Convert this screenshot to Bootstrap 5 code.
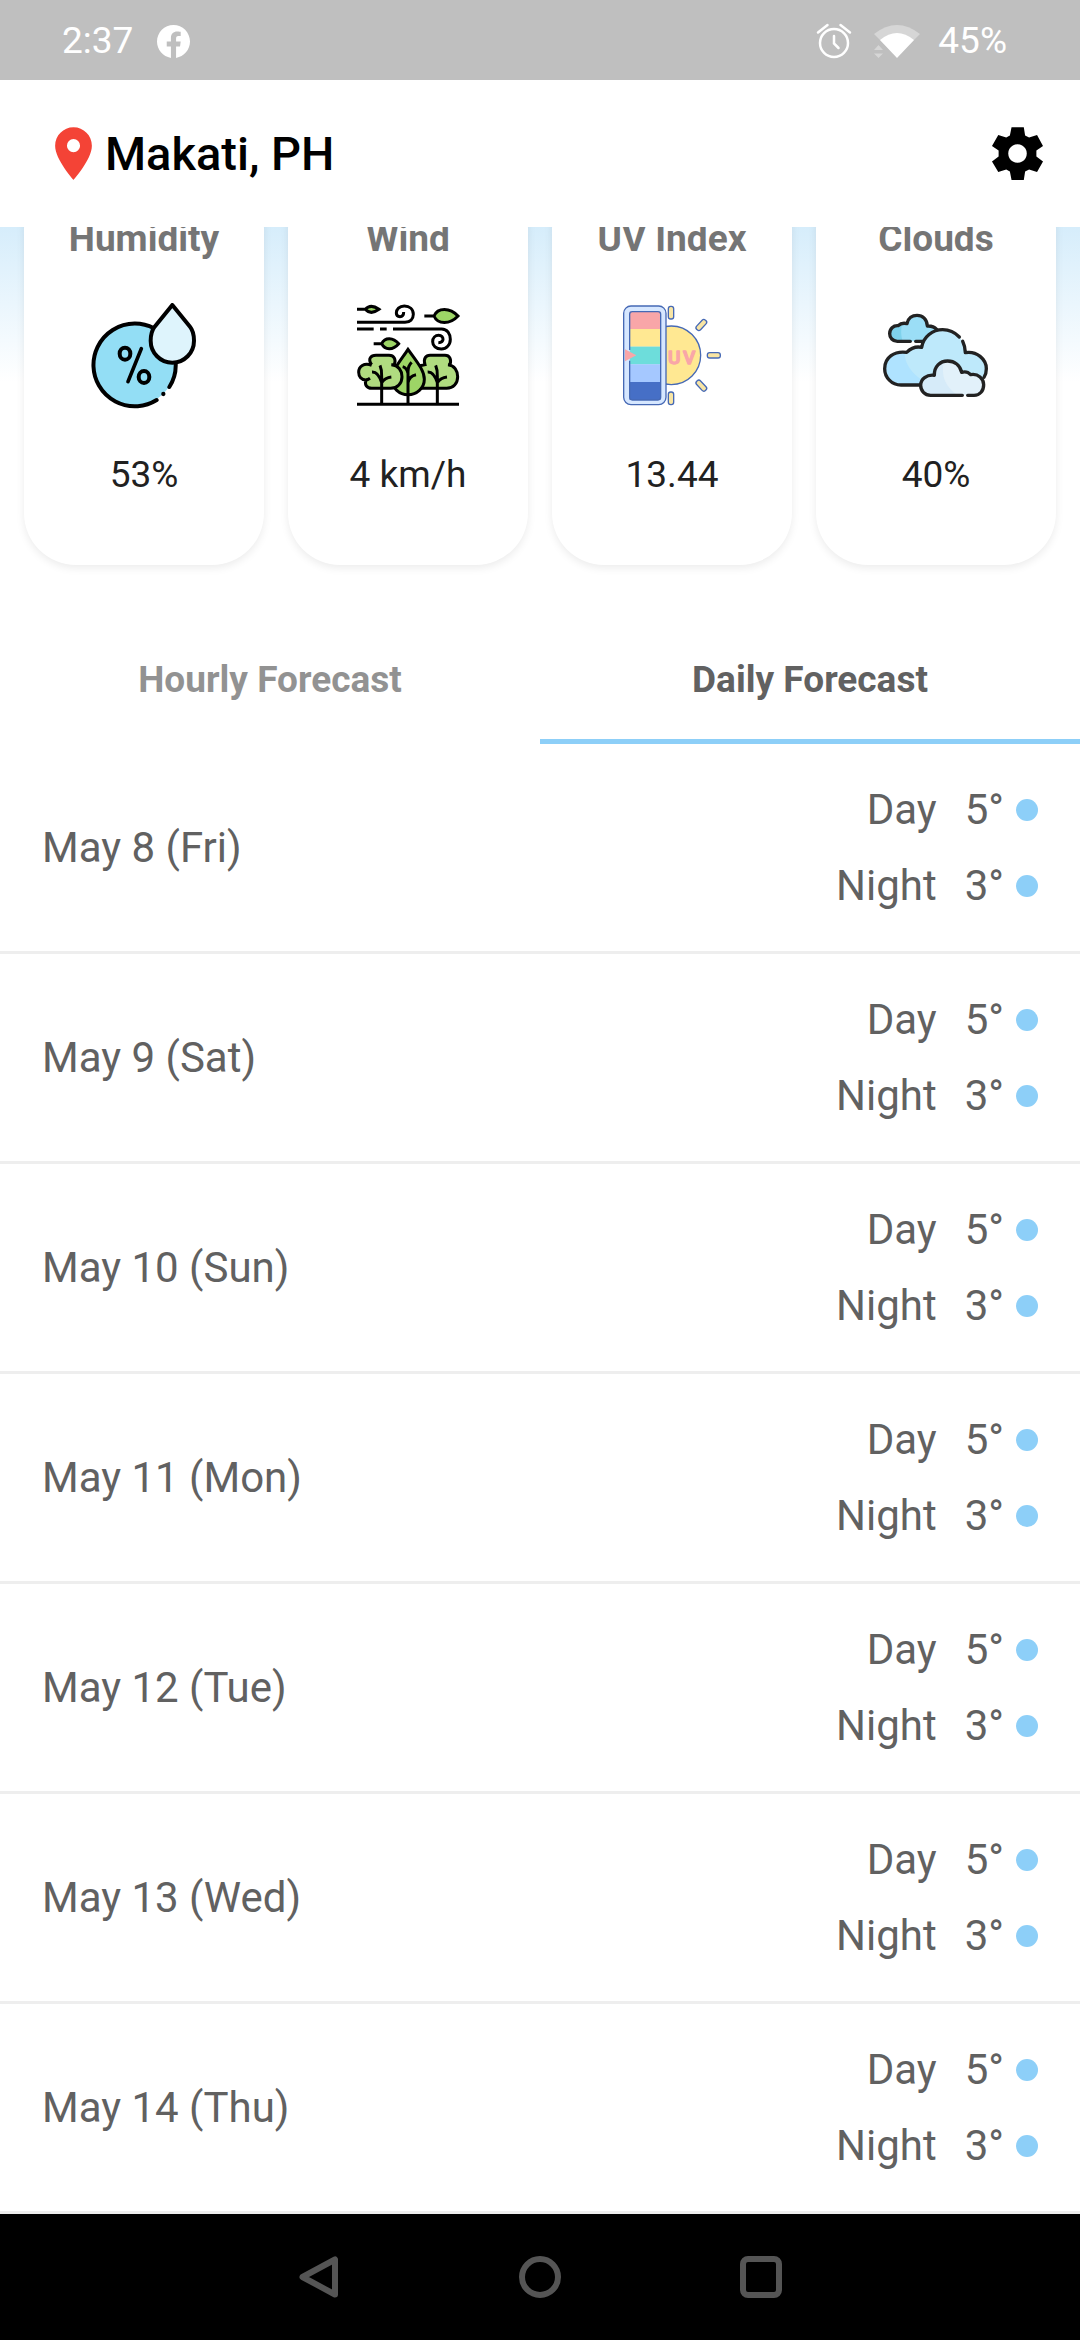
<!DOCTYPE html>
<html lang="en">
<head>
<meta charset="utf-8">
<meta name="viewport" content="width=device-width, initial-scale=1">
<title>Weather – Makati, PH</title>
<link rel="stylesheet" href="https://cdn.jsdelivr.net/npm/bootstrap@5.3.0/dist/css/bootstrap.min.css">
<style>
  body { font-family: Roboto, "Noto Sans", sans-serif; color: #616161; background: #fff; }
  svg { display: block; flex: none; }
  .status-strip { height: 80px; padding: 2px 73px 0 62px; background: #bfbfbf; color: #fff; font-size: 37px; line-height: 44px; }
  .app-bar { height: 147px; padding: 0 36px 0 42px; }
  .app-title { font-size: 47px; line-height: 56px; font-weight: 500; color: #000; }
  .conditions { overflow: hidden; padding: 0 24px 56px; background: linear-gradient(#d6edfb, #fff 155px); }
  .tile-row { display: grid; grid-template-columns: repeat(4, 1fr); gap: 24px; margin-top: -49px; }
  .tile { padding: 40px 8px 69px; border: 0; border-radius: 52px; background: #fff; box-shadow: 0 3px 9px rgba(0,0,0,.08); }
  .tile-label { margin: 0; font-size: 37px; line-height: 42px; font-weight: 700; color: #757575; }
  .tile-icon { width: 106px; height: 106px; margin: 43px 0 45px; }
  .tile-value { margin: 0; font-size: 37px; line-height: 42px; color: #212121; }
  .forecast-tabs .nav-link { padding: 38px 0; border: 0; border-bottom: 5px solid transparent; border-radius: 0; background: none; font-size: 37px; line-height: 42px; font-weight: 700; color: #929292; }
  .forecast-tabs .nav-link.active { color: #616161; border-bottom-color: #8dcff8; background: none; }
  .day-row { height: 210px; padding: 0 42px; border: 0; border-bottom: 3px solid #eee !important; font-size: 42px; line-height: 76px; color: #616161; }
  .reading { gap: 28px; }
  .temp { gap: 12px; }
  .dot { width: 22px; height: 22px; background: #8dcff8; }
  .system-nav { height: 126px; gap: 179px; background: #000; }
  .bare { padding: 0; border: 0; background: none; }
</style>
</head>
<body class="d-flex flex-column min-vh-100">

<div class="status-strip d-flex align-items-center justify-content-between">
  <div class="d-flex align-items-center">
    <span>2:37</span>
    <svg class="ms-4" width="33" height="33" viewBox="0 0 24 24" fill="#fff" aria-label="Facebook"><path d="M24 12.07C24 5.41 18.63 0 12 0S0 5.41 0 12.07c0 5.99 4.35 10.96 10.12 11.87V15.600H7.080v-3.530h3.040V9.410c0-3.020 1.800-4.700 4.550-4.700 1.310 0 2.560.24 2.560.24v2.970h-1.600c-1.490 0-1.760.93-1.760 1.880v2.270h3.370l-.5 3.530h-2.870v8.340C19.650 23.030 24 18.060 24 12.070z"/></svg>
  </div>
  <div class="d-flex align-items-center">
    <svg width="36" height="36" viewBox="0 0 36 36" fill="none" stroke="#fff" stroke-width="2.500" stroke-linecap="round" aria-label="Alarm"><circle cx="18" cy="20" r="14"/><path d="M18 13v7.500l4.500 4.500M2 9.500L11.500 2M34 9.500L24.500 2"/></svg>
    <svg class="mx-3 ps-1" width="54" height="36" viewBox="0 0 50 36" aria-label="Wi-Fi"><path d="M2 11Q25-7 48 11L25 34z" fill="#d6d6d6"/><path d="M8 17Q25 3 42 17L25 35z" fill="#fff"/><path d="M2 27l4.500-5 4.500 5zM2 30.500h9l-4.500 4.500z" fill="#d6d6d6"/></svg>
    <span>45%</span>
  </div>
</div>

<header class="app-bar d-flex align-items-center justify-content-between bg-white">
  <div class="d-flex align-items-center">
    <svg width="63" height="63" viewBox="0 0 24 24" fill="#f44336" aria-hidden="true"><path d="M12 2C8.130 2 5 5.130 5 9c0 5.250 7 13 7 13s7-7.750 7-13c0-3.870-3.130-7-7-7zm0 9.500a2.500 2.500 0 0 1 0-5 2.500 2.500 0 0 1 0 5z"/></svg>
    <h1 class="app-title m-0">Makati, PH</h1>
  </div>
  <button class="bare" type="button" aria-label="Settings">
    <svg width="53" height="53" viewBox="631 380 160 160"><path fill-rule="evenodd" d="M693 381H730L734 406 746 412 770 404 788 437 768 451V469L788 484 770 516 746 508 734 514 730 540H693L688 514 677 508 653 516 634 484 654 469V451L634 437 653 404 677 412 688 406zM711 432a28 28 0 1 0 .1 0z"/></svg>
  </button>
</header>

<section class="conditions">
  <div class="tile-row">
    <article class="card tile align-items-center">
      <h2 class="tile-label">Humidity</h2>
      <svg class="tile-icon" viewBox="273 249 318 318" fill="none" stroke="#000" stroke-width="12" stroke-linecap="round" stroke-linejoin="round" aria-hidden="true">
        <circle cx="404" cy="435" r="122" fill="#93def5" stroke="none"/>
        <path d="M462 325A124 124 0 1 0 470 540M508 501Q529 469 527 430"/>
        <circle cx="490" cy="522" r="6.500" fill="#000" stroke="none"/>
        <path fill="#def4fc" d="M517 255L570 320C580 332 582 345 582 362A65 66 0 0 1 452 362C452 345 455 332 464 320z"/>
        <ellipse cx="375" cy="401" rx="16" ry="18"/><ellipse cx="432" cy="471" rx="16" ry="18"/><path d="M424 386L384 485" stroke-width="11"/>
      </svg>
      <p class="tile-value">53%</p>
    </article>

    <article class="card tile align-items-center">
      <h2 class="tile-label">Wind</h2>
      <svg class="tile-icon" viewBox="255 249 318 318" fill="none" stroke="#000" stroke-width="9" aria-hidden="true">
        <g fill="#9dd566">
          <path d="M261 268H286M286 268Q302 250 327 268Q302 286 286 268z"/>
          <path d="M463 288H492C503 262 540 262 564 288C540 314 503 314 492 288z"/>
          <path d="M311 371H335C345 350 370 352 386 371C370 390 345 392 335 371z"/>
        </g>
        <path d="M261 307H405C420 307 430 297 430 283C430 268 419 258 403 258C388 258 379 268 379 279C379 286 384 290 390 290C397 290 401 285 401 276"/>
        <path d="M261 327H311M330 327H350M369 327H515C532 327 541 342 541 358C541 375 529 387 514 387C498 387 488 377 488 365C488 354 496 346 506 346C515 346 519 352 519 358C519 364 514 368 505 368"/>
        <path fill="#b0dc80" d="M450 437L465 434C459 415 468 406 480 406H525C539 406 545 418 540 434H534C554 436 563 453 563 470C563 490 550 505 530 505H455z"/>
        <path fill="#9dd566" d="M414 388C440 425 463 450 463 478C463 505 440 524 414 524C388 524 366 505 366 478C366 450 390 425 414 388z"/>
        <path fill="#b0dc80" d="M305 434C292 416 303 406 318 406H357C372 406 379 418 373 434H364C386 436 396 453 396 470C396 490 382 505 362 505H305C290 505 283 494 288 480C274 480 266 469 266 457C266 440 282 427 305 436"/>
        <path d="M288 480Q293 480 300 475M330 436Q336 450 335 470V553M306 456Q325 455 335 488Q345 473 364 471M497 436Q503 450 502 470V553M473 456Q492 455 502 488Q512 473 531 471M425 427Q414 437 414 455V553M398 440Q410 443 414 460M438 464Q418 468 414 488"/>
        <path d="M261 553H567"/>
      </svg>
      <p class="tile-value">4 km/h</p>
    </article>

    <article class="card tile align-items-center">
      <h2 class="tile-label">UV Index</h2>
      <svg class="tile-icon" viewBox="237 249 318 318" fill="none" stroke="#4669b5" stroke-width="4" aria-hidden="true">
        <circle cx="394" cy="406" r="88" fill="#ffe892"/>
        <g fill="#f8e5a4">
          <rect x="385" y="259" width="16" height="38" rx="7"/><rect x="385" y="516" width="16" height="38" rx="7"/>
          <rect x="502" y="398" width="39" height="16" rx="7"/>
          <rect x="465" y="307" width="38" height="16" rx="7" transform="rotate(-47 484 315)"/>
          <rect x="465" y="489" width="38" height="16" rx="7" transform="rotate(47 484 497)"/>
        </g>
        <rect x="251" y="258" width="127" height="296" rx="22" fill="#d6e7ff"/>
        <g stroke="none">
          <path fill="#f9a6a8" d="M269 275H361V327H269z"/><path fill="#ffe892" d="M269 327H361V380H269z"/>
          <path fill="#6ddddb" d="M269 380H361V433H269z"/><path fill="#a5c8ff" d="M269 433H361V486H269z"/>
          <path fill="#466fc6" d="M269 486H361V540H269z"/><path fill="#f9a6a8" d="M255 388L289 406 255 424z"/>
        </g>
        <path d="M269 390V283Q269 275 277 275H354Q362 275 362 283V532Q362 540 354 540H277Q269 540 269 532V422"/>
        <text x="384" y="431" font-family="Roboto, sans-serif" font-size="57" font-weight="500" fill="#f9a6a8" stroke="#f9a6a8" stroke-width="4" stroke-linejoin="round">U<tspan x="429">V</tspan></text>
      </svg>
      <p class="tile-value">13.44</p>
    </article>

    <article class="card tile align-items-center">
      <h2 class="tile-label">Clouds</h2>
      <svg class="tile-icon" viewBox="249 249 318 318" fill="none" stroke="#222" stroke-width="10" stroke-linecap="round" stroke-linejoin="round" aria-hidden="true">
        <path stroke="none" fill="#9bdef6" d="M374 364H292C278 364 269 353 269 341C269 326 280 316 294 317Q305 307 321 311C324 294 337 286 351 286C368 286 381 298 382 318Q402 317 410 330z"/>
        <path stroke="none" fill="#7fd2ec" d="M308 364H292C278 364 269 353 269 341C269 326 280 316 294 317L306 314Q300 340 308 364z"/>
        <path d="M374 364H347M331 364H292C278 364 269 353 269 341C269 326 280 316 294 317Q305 307 321 311C324 294 337 286 351 286C368 286 381 298 382 318Q400 317 410 328"/>
        <path stroke="none" fill="#bee9fb" d="M360 495H303C275 495 254 472 254 446C254 412 283 392 320 397Q340 377 365 382C370 350 398 329 428 329C462 329 492 352 496 398C530 392 559 418 559 446Q559 462 551 475L500 500z"/>
        <path stroke="none" fill="#afe3ff" d="M370 495H303C275 495 254 472 254 446C254 418 279 395 313 396Q316 450 370 482z"/>
        <path d="M360 495H303C275 495 254 472 254 446C254 412 283 392 320 397Q340 377 365 382C370 350 398 329 428 329Q457 329 478 351M488 364Q495 378 496 398C530 392 559 418 559 446Q559 462 552 472"/>
        <path stroke="none" fill="#e2f1fa" d="M392 526C374 526 362 512 362 496C362 477 380 463 403 466C402 440 420 423 443 423C464 423 480 436 485 457Q501 452 512 464C535 460 551 476 551 494C551 512 540 526 522 526z"/>
        <path stroke="none" fill="#d6ebf9" d="M392 526C374 526 362 512 362 496C362 477 380 463 403 466C402 446 412 430 431 425Q418 490 474 526z"/>
        <path d="M487 526H392C374 526 362 512 362 496C362 477 380 463 403 466C402 440 420 423 443 423C464 423 480 436 485 457Q501 452 512 464C535 460 551 476 551 494C551 512 540 526 522 526H503"/>
      </svg>
      <p class="tile-value">40%</p>
    </article>
  </div>
</section>

<div class="forecast-tabs nav nav-fill flex-nowrap" role="tablist">
  <button class="nav-link w-50" type="button" role="tab" aria-selected="false">Hourly Forecast</button>
  <button class="nav-link w-50 active" type="button" role="tab" aria-selected="true">Daily Forecast</button>
</div>

<ul class="list-group list-group-flush">
  <li class="list-group-item day-row d-flex align-items-center justify-content-between"><span>May 8 (Fri)</span><div><div class="reading d-flex justify-content-end"><span>Day</span><span class="temp d-flex align-items-center">5°<i class="dot rounded-circle"></i></span></div><div class="reading d-flex justify-content-end"><span>Night</span><span class="temp d-flex align-items-center">3°<i class="dot rounded-circle"></i></span></div></div></li>
  <li class="list-group-item day-row d-flex align-items-center justify-content-between"><span>May 9 (Sat)</span><div><div class="reading d-flex justify-content-end"><span>Day</span><span class="temp d-flex align-items-center">5°<i class="dot rounded-circle"></i></span></div><div class="reading d-flex justify-content-end"><span>Night</span><span class="temp d-flex align-items-center">3°<i class="dot rounded-circle"></i></span></div></div></li>
  <li class="list-group-item day-row d-flex align-items-center justify-content-between"><span>May 10 (Sun)</span><div><div class="reading d-flex justify-content-end"><span>Day</span><span class="temp d-flex align-items-center">5°<i class="dot rounded-circle"></i></span></div><div class="reading d-flex justify-content-end"><span>Night</span><span class="temp d-flex align-items-center">3°<i class="dot rounded-circle"></i></span></div></div></li>
  <li class="list-group-item day-row d-flex align-items-center justify-content-between"><span>May 11 (Mon)</span><div><div class="reading d-flex justify-content-end"><span>Day</span><span class="temp d-flex align-items-center">5°<i class="dot rounded-circle"></i></span></div><div class="reading d-flex justify-content-end"><span>Night</span><span class="temp d-flex align-items-center">3°<i class="dot rounded-circle"></i></span></div></div></li>
  <li class="list-group-item day-row d-flex align-items-center justify-content-between"><span>May 12 (Tue)</span><div><div class="reading d-flex justify-content-end"><span>Day</span><span class="temp d-flex align-items-center">5°<i class="dot rounded-circle"></i></span></div><div class="reading d-flex justify-content-end"><span>Night</span><span class="temp d-flex align-items-center">3°<i class="dot rounded-circle"></i></span></div></div></li>
  <li class="list-group-item day-row d-flex align-items-center justify-content-between"><span>May 13 (Wed)</span><div><div class="reading d-flex justify-content-end"><span>Day</span><span class="temp d-flex align-items-center">5°<i class="dot rounded-circle"></i></span></div><div class="reading d-flex justify-content-end"><span>Night</span><span class="temp d-flex align-items-center">3°<i class="dot rounded-circle"></i></span></div></div></li>
  <li class="list-group-item day-row d-flex align-items-center justify-content-between"><span>May 14 (Thu)</span><div><div class="reading d-flex justify-content-end"><span>Day</span><span class="temp d-flex align-items-center">5°<i class="dot rounded-circle"></i></span></div><div class="reading d-flex justify-content-end"><span>Night</span><span class="temp d-flex align-items-center">3°<i class="dot rounded-circle"></i></span></div></div></li>
</ul>

<nav class="system-nav d-flex align-items-center justify-content-center mt-auto" aria-label="System">
  <button class="bare" type="button" aria-label="Back"><svg width="42" height="42" viewBox="0 0 42 42" fill="none" stroke="#555" stroke-width="6" stroke-linejoin="round"><path d="M37 3.500V38.500L4.500 21z"/></svg></button>
  <button class="bare" type="button" aria-label="Home"><svg width="42" height="42" viewBox="0 0 42 42" fill="none" stroke="#555" stroke-width="6"><circle cx="21" cy="21" r="18"/></svg></button>
  <button class="bare" type="button" aria-label="Recent apps"><svg width="42" height="42" viewBox="0 0 42 42" fill="none" stroke="#555" stroke-width="6"><rect x="3" y="3" width="36" height="36" rx="5"/></svg></button>
</nav>

<script src="https://cdn.jsdelivr.net/npm/bootstrap@5.3.0/dist/js/bootstrap.bundle.min.js"></script>
</body>
</html>
